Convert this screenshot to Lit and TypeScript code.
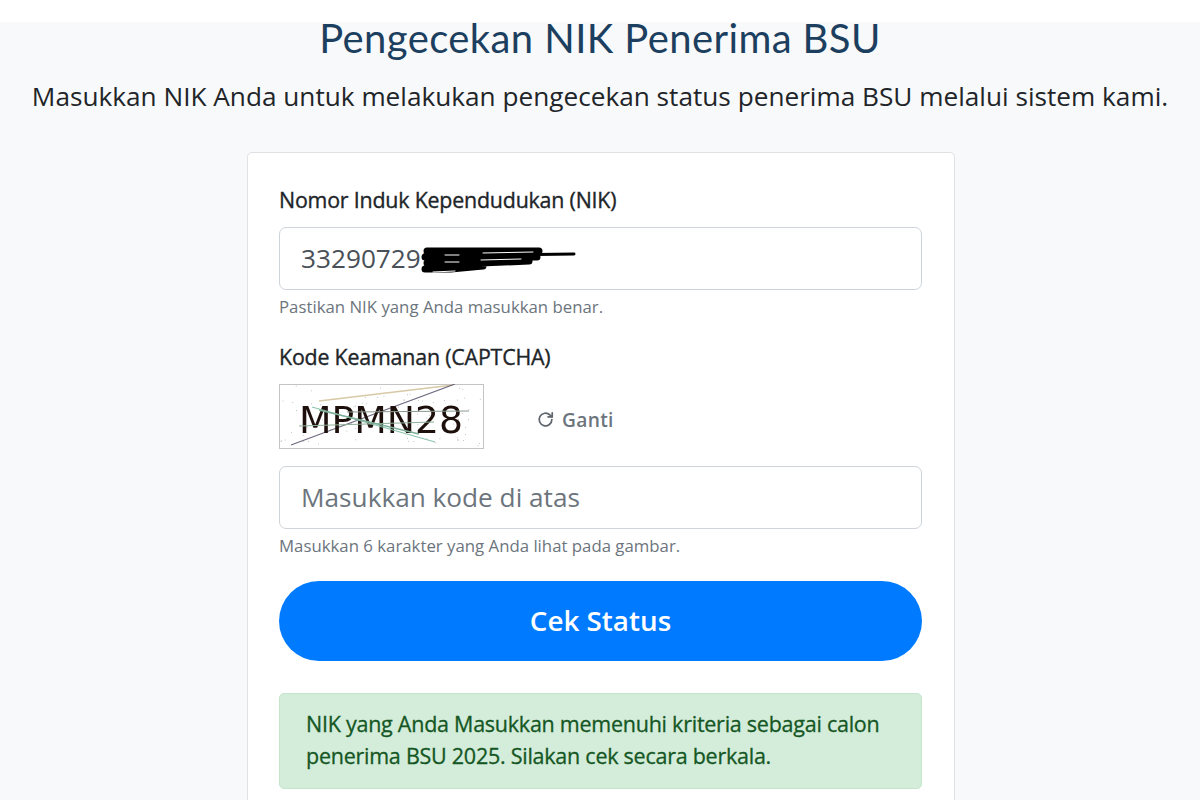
import { LitElement, html, css, svg } from "lit";
import { customElement } from "lit/decorators.js";

const dots: [number, number][] = [];
let seed = 7;
const rnd = () => { seed = (seed * 16807) % 2147483647; return seed / 2147483647; };
for (let i = 0; i < 90; i++) dots.push([2 + rnd() * 200, 2 + rnd() * 60]);

@customElement("app-root")
export class AppRoot extends LitElement {
  static styles = css`
    :host { display: block; height: 800px; overflow: hidden; background: #f8f9fa; font-family: "Open Sans", sans-serif; color: #212529; }
    .top { height: 22px; background: #fff; }
    .head { text-align: center; }
    h1 { margin: -8px 0 0; font-family: Lato, sans-serif; font-weight: 400; font-size: 40px; line-height: 48px; color: #1c3f60; letter-spacing: 0.4px; }
    .lead { margin: 15px 0 0; font-size: 26.2px; line-height: 38px; color: #212529; white-space: nowrap; }
    .card { box-sizing: border-box; width: 708px; margin: 37px 0 0 247px; background: #fff; border: 1px solid #dfe1e4; border-radius: 5px; padding: 31px 32px 31px 31px; }
    label { display: block; font-size: 21.4px; font-weight: 400; line-height: 32px; letter-spacing: -0.2px; color: #212529; -webkit-text-stroke: 0.35px #212529; }
    .input { position: relative; box-sizing: border-box; height: 63px; margin-top: 11px; border: 1px solid #ced4da; border-radius: 7px; background: #fff; padding: 0 21px 2px; display: flex; align-items: center; font-size: 26.2px; color: #495057; }
    .input.ph { color: #6c757d; }
    .help { font-size: 16.8px; line-height: 24px; color: #6c757d; margin-top: 5px; }
    .group2 { margin-top: 22px; }
    .cap { display: flex; align-items: center; margin-top: 11px; height: 65px; }
    .cap svg.img { display: block; width: 205px; height: 65px; filter: blur(0.35px); }
    .ganti { margin: 5px 0 0 52px; display: flex; align-items: center; gap: 7px; font-size: 19.2px; font-weight: 600; color: #6c757d; letter-spacing: 0.3px; }
    .ganti svg { width: 19px; height: 19px; }
    .input.code { margin-top: 17px; }
    .scribble { position: absolute; left: 141px; top: 18px; width: 157px; height: 34px; }
    button { display: block; box-sizing: border-box; width: 100%; height: 80px; margin-top: 23px; padding: 0 0 2px; border: 0; border-radius: 40px; background: #007bff; color: #fff; font-family: inherit; font-size: 27.8px; font-weight: 600; }
    .alert { box-sizing: border-box; margin-top: 32px; padding: 14px 26px 16px; border: 1px solid #c3e6cb; border-radius: 5px; background: #d4edda; color: #155724; font-size: 21.5px; line-height: 32px; font-weight: 400; letter-spacing: -0.25px; -webkit-text-stroke: 0.3px #155724; }
  `;

  render() {
    return html`
      <div class="top"></div>
      <div class="head">
        <h1>Pengecekan NIK Penerima BSU</h1>
        <p class="lead">Masukkan NIK Anda untuk melakukan pengecekan status penerima BSU melalui sistem kami.</p>
      </div>
      <div class="card">
        <label>Nomor Induk Kependudukan (NIK)</label>
        <div class="input">
          332907291
          <svg class="scribble" viewBox="0 0 157 34" fill="none" stroke="#000" stroke-linecap="round">
            <path stroke-width="7" d="M6 5 L60 5 L118 5 M4 11 L60 11 L116 11 M6 17 L60 17 L108 15 M4 23 L30 23 L62 20"/>
            <path stroke-width="3" d="M116 8.5 L153 8"/>
            <path stroke-width="1" stroke="#fff" d="M24 9 L38 9 M62 7 L112 6 M24 16 L38 16 M60 14 L100 13 M12 26 L34 25"/>
          </svg>
        </div>
        <div class="help">Pastikan NIK yang Anda masukkan benar.</div>
        <div class="group2"><label>Kode Keamanan (CAPTCHA)</label></div>
        <div class="cap">
          <svg class="img" viewBox="0 0 205 65">
            <rect x="0.5" y="0.5" width="204" height="64" fill="#fff" stroke="#c4c4c4"/>
            ${dots.map(([x, y]) => svg`<circle cx=${x} cy=${y} r="0.5" fill="#b0b0b0"/>`)}
            <path d="M40 17 L174 1" stroke="#d8c9a6" stroke-width="1.6"/>
            <path d="M12 61 L176 0" stroke="#6f6a80" stroke-width="1.2"/>
            <text x="20" y="49" font-family="'DejaVu Sans', sans-serif" font-size="38" textLength="164" lengthAdjust="spacingAndGlyphs" fill="#1d0f0c">MPMN28</text>
            <path d="M33 23 L156 58" stroke="#8cc4ad" stroke-width="1.2"/>
            <path d="M68 28 L190 27" stroke="#8a9a90" stroke-width="1"/>
            <path d="M20 42 L155 38" stroke="#8fae98" stroke-width="1.1"/>
            <path d="M40 26 L140 50" stroke="#7fb09a" stroke-width="1.4"/>
          </svg>
          <div class="ganti">
            <svg viewBox="0 0 24 24" fill="none" stroke="#5f666d" stroke-width="2.2" stroke-linecap="round" stroke-linejoin="round">
              <path d="M20 12a8 8 0 1 1-2.5-5.8L20 8.5"/><path d="M20.5 3.5v5.2h-5.2"/>
            </svg>
            Ganti
          </div>
        </div>
        <div class="input ph code">Masukkan kode di atas</div>
        <div class="help">Masukkan 6 karakter yang Anda lihat pada gambar.</div>
        <button>Cek Status</button>
        <div class="alert">NIK yang Anda Masukkan memenuhi kriteria sebagai calon<br />penerima BSU 2025. Silakan cek secara berkala.</div>
      </div>
    `;
  }
}
